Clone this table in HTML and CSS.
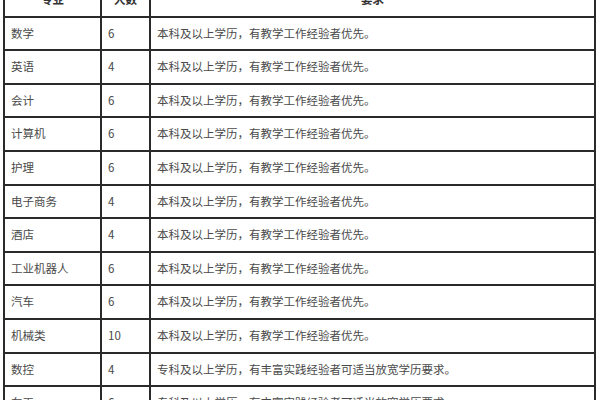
FILE: index.html
```html
<!DOCTYPE html>
<html lang="zh">
<head>
<meta charset="utf-8">
<link rel="stylesheet" href="styles.css">
</head>
<body>
<table class="jobs">
  <colgroup>
    <col class="c-major">
    <col class="c-num">
    <col class="c-req">
  </colgroup>
  <thead>
    <tr><th>专业</th><th>人数</th><th>要求</th></tr>
  </thead>
  <tbody>
    <tr><td>数学</td><td>6</td><td>本科及以上学历，有教学工作经验者优先。</td></tr>
    <tr><td>英语</td><td>4</td><td>本科及以上学历，有教学工作经验者优先。</td></tr>
    <tr><td>会计</td><td>6</td><td>本科及以上学历，有教学工作经验者优先。</td></tr>
    <tr><td>计算机</td><td>6</td><td>本科及以上学历，有教学工作经验者优先。</td></tr>
    <tr><td>护理</td><td>6</td><td>本科及以上学历，有教学工作经验者优先。</td></tr>
    <tr><td>电子商务</td><td>4</td><td>本科及以上学历，有教学工作经验者优先。</td></tr>
    <tr><td>酒店</td><td>4</td><td>本科及以上学历，有教学工作经验者优先。</td></tr>
    <tr><td>工业机器人</td><td>6</td><td>本科及以上学历，有教学工作经验者优先。</td></tr>
    <tr><td>汽车</td><td>6</td><td>本科及以上学历，有教学工作经验者优先。</td></tr>
    <tr><td>机械类</td><td>10</td><td>本科及以上学历，有教学工作经验者优先。</td></tr>
    <tr><td>数控</td><td>4</td><td>专科及以上学历，有丰富实践经验者可适当放宽学历要求。</td></tr>
    <tr><td>车工</td><td>6</td><td>专科及以上学历，有丰富实践经验者可适当放宽学历要求。</td></tr>
  </tbody>
</table>
</body>
</html>
```
FILE: styles.css
```css
html, body {
  margin: 0;
  padding: 0;
  background: #ffffff;
  overflow: hidden;
}
body {
  font-family: "Noto Sans CJK SC", "Liberation Sans", sans-serif;
  font-size: 11.5px;
  color: #4a4a4a;
}
.jobs {
  border-collapse: collapse;
  margin: -18px 0 0 3px;
  width: 591px;
  table-layout: fixed;
}
.c-major { width: 97px; }
.c-num { width: 49px; }
.c-req { width: 445px; }
.jobs th,
.jobs td {
  border: 2px solid #2a2a2a;
  height: 33.6px;
  padding: 0 0 0 6px;
  text-align: left;
  vertical-align: middle;
  line-height: 1;
  box-sizing: border-box;
}
.jobs th {
  text-align: center;
  padding: 0;
  font-weight: bold;
  color: #333;
}
```
